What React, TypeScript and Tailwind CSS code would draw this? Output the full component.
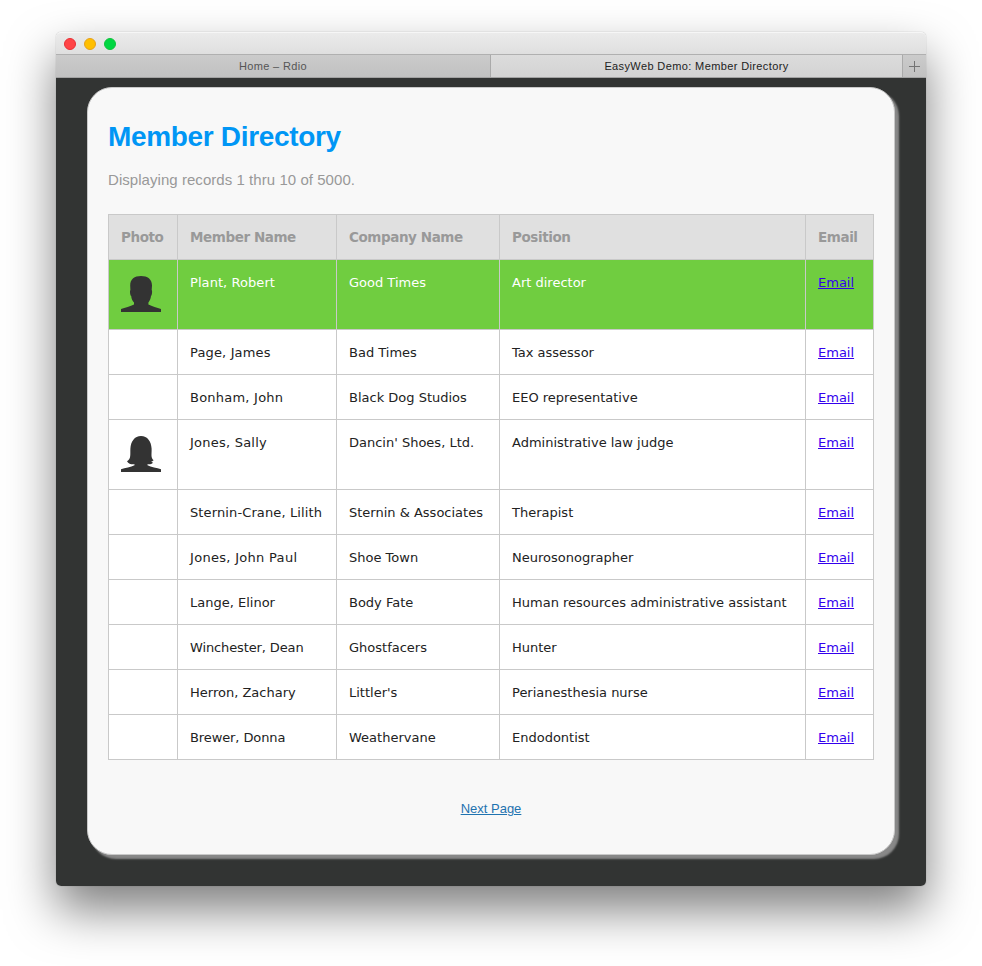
import React from 'react';

type Photo = 'man' | 'woman';
type Member = { name: string; company: string; position: string; photo?: Photo; tracking?: string };

const members: Member[] = [
  { name: 'Plant, Robert', company: 'Good Times', position: 'Art director', photo: 'man', tracking: 'tracking-[0.07px]' },
  { name: 'Page, James', company: 'Bad Times', position: 'Tax assessor', tracking: 'tracking-[0.15px]' },
  { name: 'Bonham, John', company: 'Black Dog Studios', position: 'EEO representative', tracking: 'tracking-[0.23px]' },
  { name: 'Jones, Sally', company: "Dancin' Shoes, Ltd.", position: 'Administrative law judge', photo: 'woman', tracking: 'tracking-[0.23px]' },
  { name: 'Sternin-Crane, Lilith', company: 'Sternin & Associates', position: 'Therapist', tracking: 'tracking-[0.12px]' },
  { name: 'Jones, John Paul', company: 'Shoe Town', position: 'Neurosonographer', tracking: 'tracking-[0.3px]' },
  { name: 'Lange, Elinor', company: 'Body Fate', position: 'Human resources administrative assistant' },
  { name: 'Winchester, Dean', company: 'Ghostfacers', position: 'Hunter', tracking: 'tracking-[-0.12px]' },
  { name: 'Herron, Zachary', company: "Littler's", position: 'Perianesthesia nurse' },
  { name: 'Brewer, Donna', company: 'Weathervane', position: 'Endodontist', tracking: 'tracking-[-0.1px]' },
];

const headings = ['Photo', 'Member Name', 'Company Name', 'Position', 'Email'];
const columns = 'grid grid-cols-[69px_159px_163px_306px_68px]';
const cell = 'border-r border-b border-[#c9c9c9] pl-3 whitespace-nowrap';

function Silhouette({ kind }: { kind: Photo }) {
  return (
    <svg width="40" height="40" viewBox="0 0 40 40" fill="#333" className="block">
      {kind === 'man' ? (
        <path d="M20 0C26.500 0 31 3 31 9.500L30.700 14C31.600 15 30.900 19.500 30 20C29.800 23 28.500 25 27.400 26.500V28.500C31 30.500 36 31.600 40 33V36H0V33C4 31.600 9.500 30.500 13 28.500V26.500C11.500 25 10.400 23 10.200 20C9.200 19.500 8.600 15 9.400 14L9.200 9.500C9.200 3 13.500 0 20 0Z" />
      ) : (
        <path d="M20 0C26.500 0 30.300 5.500 30.600 12.500C30.800 18.500 29.500 21.500 32.600 24.300C31.800 25.300 30.800 25.500 30 25.600L32 26.700C30.500 28.300 28.500 28.500 26.500 28.200V29.200C30 31 36 31.900 40 33.300V36H0V33.300C4 31.900 10 31 13.500 29.200V28.200C11 28.700 7.600 28 6 25.200C10.400 23 9.100 18 9.400 12.500C9.800 5.500 13.500 0 20 0Z" />
      )}
    </svg>
  );
}

export default function App() {
  return (
    <div className="h-[966px] w-[982px] overflow-hidden bg-white pt-8 pl-14">
      <div className="h-[854px] w-[870px] overflow-hidden rounded-[5px] bg-linear-to-b from-[#ebebeb] from-[22px] to-[#323433] to-[22px] shadow-[0_0_1px_rgba(0,0,0,0.4),0_24px_48px_rgba(0,0,0,0.5)]">
        <div className="flex h-[22px] items-center gap-2 rounded-t-[5px] border-t border-[#f6f6f6] bg-linear-to-b from-[#ebebeb] to-[#dfdfdf] pl-2">
          <span className="size-3 rounded-full border border-[#e92f35] bg-[#ff4446]" />
          <span className="size-3 rounded-full border border-[#e6a11a] bg-[#ffbf00]" />
          <span className="size-3 rounded-full border border-[#0fc33c] bg-[#00d742]" />
        </div>
        <div className="flex h-6 border-y border-t-[#b0b0b0] border-b-[#a2a2a2] text-center font-['Liberation_Sans',sans-serif] text-[11px] leading-[22px]">
          <div className="w-[435px] border-r border-[#aaa] bg-linear-to-b from-[#cbcbcb] to-[#c1c1c1] text-[#555]">
            <span className="tracking-[0.36px]">Home – Rdio</span>
          </div>
          <div className="w-[412px] border-r border-[#aaa] bg-linear-to-b from-[#dcdcdc] to-[#d3d3d3] text-[#222]">
            <span className="tracking-[0.38px]">EasyWeb Demo: Member Directory</span>
          </div>
          <div className="flex-1 bg-linear-to-b from-[#cbcbcb] to-[#c1c1c1] pt-[6px] pl-[6px]">
            <svg width="11" height="11" viewBox="0 0 11 11" stroke="#737373" fill="none">
              <path d="M5.500 0V11M0 5.500H11" />
            </svg>
          </div>
        </div>
        <main className="mt-[9px] ml-[31px] h-[768px] w-[808px] rounded-[25px] border border-[#c9c9c9] bg-[#f8f8f8] pl-5 shadow-[4px_4px_2px_#888] font-['Liberation_Sans',sans-serif]">
          <h1 className="pt-[31px] text-[28px] leading-[36px] font-bold tracking-[-0.33px] text-[#0096f5]">Member Directory</h1>
          <p className="mt-[15px] text-[15px] leading-5 tracking-[0.05px] text-[#999]">Displaying records 1 thru 10 of 5000.</p>
          <div className="mt-6 w-[766px] border-t border-l border-[#c9c9c9] font-['DejaVu_Sans',Verdana,sans-serif] text-[13px] leading-5 text-[#222]">
            <div className={`${columns} h-[45px] bg-[#e0e0e0] text-[13.5px] font-bold tracking-[-0.42px] text-[#999]`}>
              {headings.map((h) => (
                <div key={h} className={`${cell} pt-3`}>{h}</div>
              ))}
            </div>
            {members.map((m, i) => (
              <div
                key={m.name}
                className={`${columns} ${m.photo ? 'h-[70px]' : 'h-[45px]'} ${i === 0 ? 'bg-[#70cd40] text-white' : 'bg-white'}`}
              >
                <div className={`${cell} pt-4`}>{m.photo && <Silhouette kind={m.photo} />}</div>
                <div className={`${cell} pt-[13px] ${m.tracking ?? ''}`}>{m.name}</div>
                <div className={`${cell} pt-[13px]`}>{m.company}</div>
                <div className={`${cell} pt-[13px]`}>{m.position}</div>
                <div className={`${cell} pt-[13px]`}>
                  <a className="text-[#3300ee] underline">Email</a>
                </div>
              </div>
            ))}
          </div>
          <div className="mt-[39px] w-[766px] text-center text-[13px] leading-5">
            <a className="text-[#1f73b0] underline">Next Page</a>
          </div>
        </main>
      </div>
    </div>
  );
}
